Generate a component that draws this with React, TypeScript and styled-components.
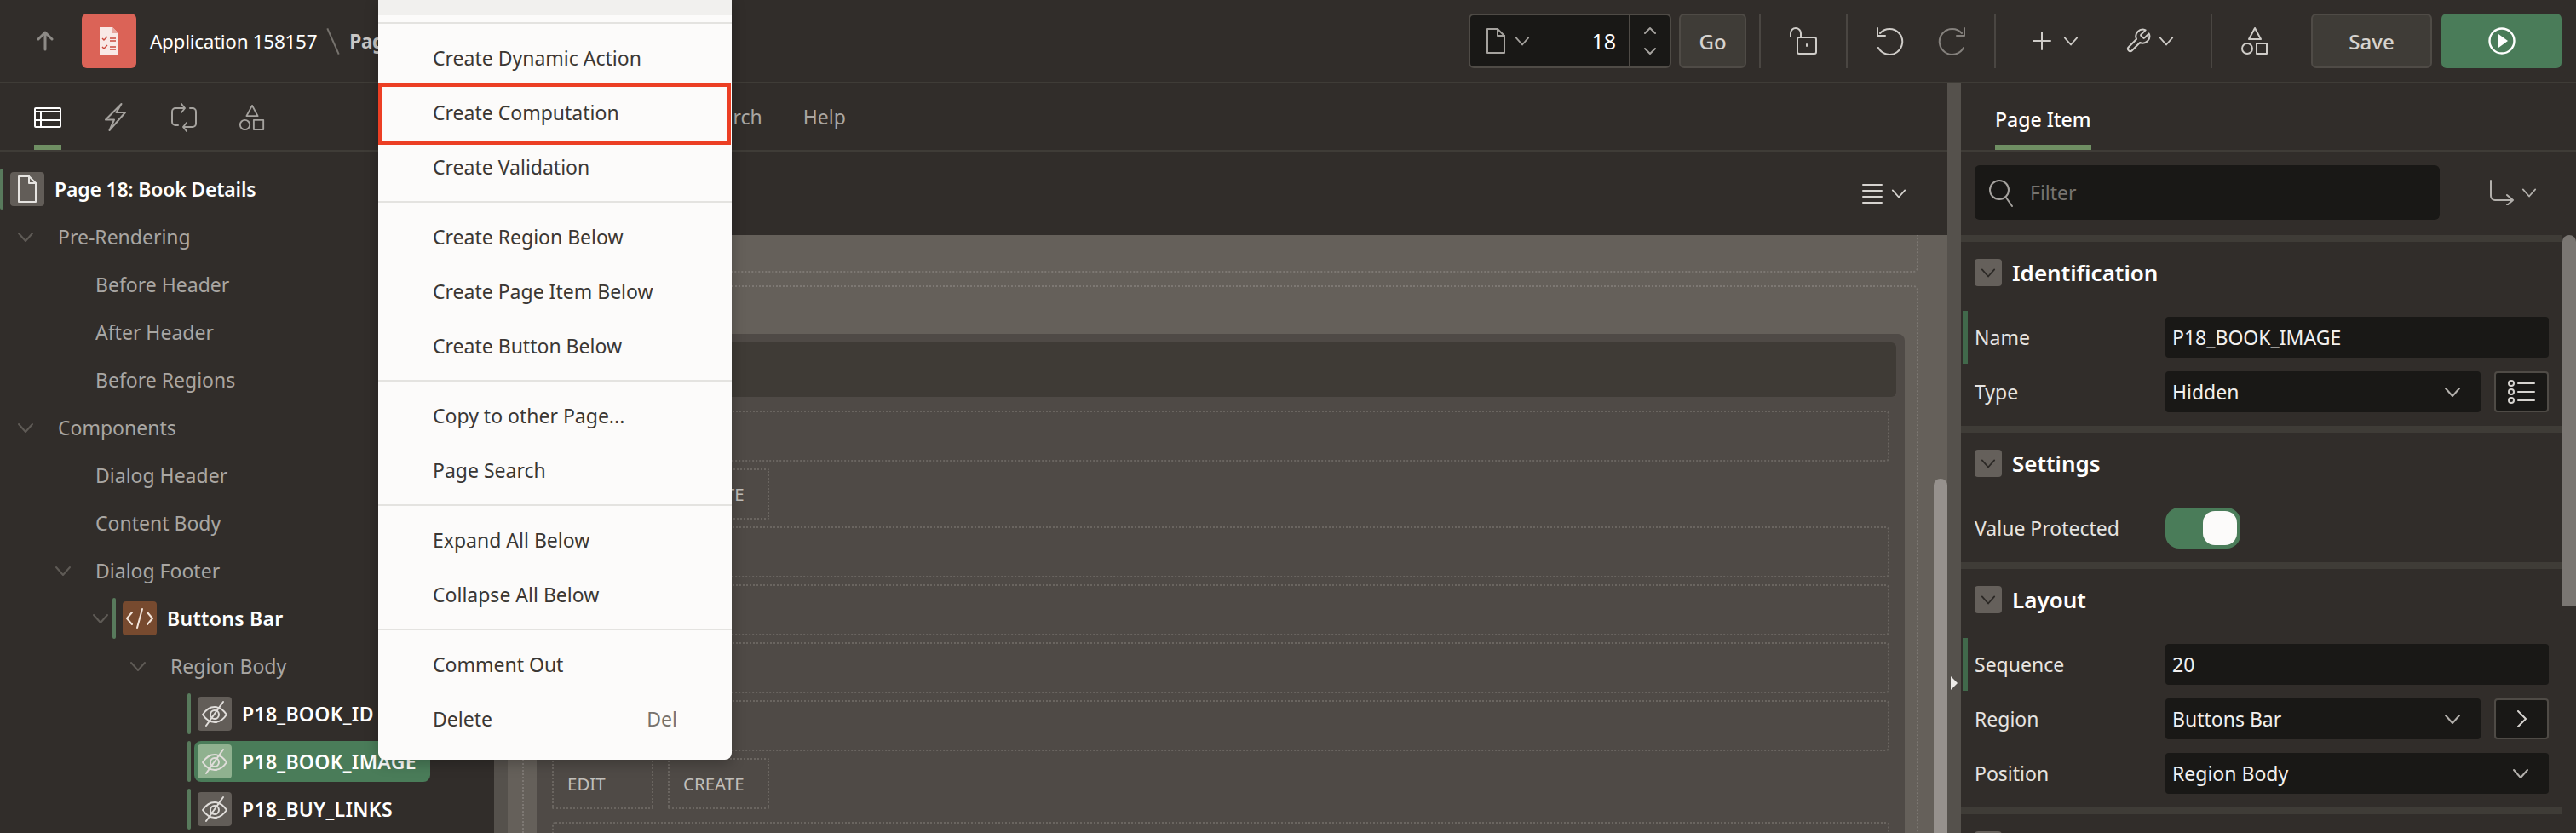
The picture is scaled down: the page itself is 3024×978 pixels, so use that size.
import React from "react";
import styled, { createGlobalStyle } from "styled-components";

const Global = createGlobalStyle`
  html, body { margin: 0; padding: 0; background: #312d2a; }
  * { box-sizing: border-box; }
  body { font-family: "Noto Sans", "Open Sans", sans-serif; }
`;

const C = {
  bg: "#312d2a",
  line: "#3f3c37",
  split: "#55514c",
  edge: "#4f4b46",
  field: "#191816",
  green: "#4a7c59",
  tab: "#6f8f63",
  bar: "#587a5c",
  mark: "#41694b",
  text: "#a9a6a2",
  icon: "#cfccc8",
};

const Page = styled.div`
  position: relative;
  width: 3024px;
  height: 978px;
  overflow: hidden;
  background: ${C.bg};
  display: flex;
  flex-direction: column;
  font-size: 23px;
  color: #fff;
`;

const Glyph = styled.svg<{ $c?: string; $sw?: number }>`
  display: block;
  flex: none;
  fill: none;
  stroke: ${(p) => p.$c || C.icon};
  stroke-width: ${(p) => p.$sw ?? 2};
  stroke-linecap: round;
  stroke-linejoin: round;
`;

const Header = styled.header`
  flex: none;
  height: 98px;
  padding: 16px 17px 16px 40px;
  border-bottom: 2px solid ${C.line};
  display: flex;
  align-items: stretch;
`;
const Back = styled.div`
  width: 56px;
  display: flex;
  align-items: center;
  padding-left: 3px;
`;
const Logo = styled.div`
  width: 64px;
  height: 64px;
  border-radius: 6px;
  background: #db6357;
  display: flex;
  align-items: center;
  justify-content: center;
`;
const Crumbs = styled.div`
  display: flex;
  align-items: center;
  margin-left: 16px;
  font-size: 22.5px;
  letter-spacing: -0.3px;
`;
const CrumbSlash = styled.span`
  display: block;
  width: 2px;
  height: 33px;
  margin: 0 18px;
  background: #77736e;
  transform: rotate(-24deg);
`;
const CrumbBold = styled.span`
  font-weight: 700;
  color: #c9c6c2;
`;
const Tools = styled.div`
  margin-left: auto;
  display: flex;
  align-items: stretch;
`;
const PageBox = styled.div`
  width: 238px;
  border: 2px solid ${C.edge};
  border-radius: 6px;
  background: ${C.field};
  display: flex;
  align-items: center;
  padding-left: 18px;
`;
const PageNo = styled.span`
  flex: 1;
  text-align: right;
  padding-right: 15px;
  font-size: 25px;
`;
const Stepper = styled.div`
  width: 48px;
  align-self: stretch;
  border-left: 2px solid ${C.edge};
  display: flex;
  flex-direction: column;
  align-items: center;
  justify-content: space-evenly;
`;
const GhostButton = styled.div<{ $w: number; $ml: number }>`
  width: ${(p) => p.$w}px;
  margin-left: ${(p) => p.$ml}px;
  background: ${C.line};
  border: 2px solid ${C.edge};
  border-radius: 6px;
  color: #d6d3cf;
  font-size: 24px;
  font-weight: 500;
  display: flex;
  align-items: center;
  justify-content: center;
`;
const RunButton = styled.div`
  width: 141px;
  margin-left: 11px;
  background: ${C.green};
  border-radius: 6px;
  display: flex;
  align-items: center;
  justify-content: center;
`;
const ToolGroup = styled.div<{ $w: number; $pl?: number; $center?: boolean }>`
  width: ${(p) => p.$w}px;
  padding-left: ${(p) => p.$pl ?? 0}px;
  border-left: 2px solid #4a4642;
  display: flex;
  align-items: center;
  justify-content: ${(p) => (p.$center ? "center" : "flex-start")};
`;
const Gap = styled.span<{ $w: number }>`
  flex: none;
  width: ${(p) => p.$w}px;
`;

const Main = styled.div`
  flex: 1;
  min-height: 0;
  display: flex;
`;
const TabStrip = styled.div`
  flex: none;
  height: 80px;
  border-bottom: 2px solid ${C.line};
  display: flex;
  align-items: flex-end;
`;
const LeftPanel = styled.aside`
  flex: none;
  width: 580px;
  display: flex;
  flex-direction: column;
`;
const IconTab = styled.div<{ $on?: boolean }>`
  width: 32px;
  height: 72px;
  margin-right: 48px;
  padding: 18px 0 16px;
  display: flex;
  justify-content: center;
  align-items: center;
  border-bottom: 6px solid ${(p) => (p.$on ? C.tab : "transparent")};
`;
const IconTabs = styled.div`
  display: flex;
  padding-left: 40px;
`;
const Tree = styled.div`
  padding-top: 16px;
  display: flex;
  flex-direction: column;
`;
const Row = styled.div<{ $pad: number }>`
  height: 56px;
  flex: none;
  padding-left: ${(p) => p.$pad}px;
  display: flex;
  align-items: center;
`;
const Twisty = styled.span<{ $w: number }>`
  flex: none;
  width: ${(p) => p.$w}px;
`;
const Marker = styled.span`
  flex: none;
  width: 4px;
  height: 48px;
  border-radius: 2px;
  background: ${C.bar};
  margin-right: 4px;
`;
const Pill = styled.div<{ $on?: boolean; $flush?: boolean }>`
  height: 48px;
  padding: ${(p) => (p.$flush ? "0" : "0 16px 0 4px")};
  display: flex;
  align-items: center;
  gap: 12px;
  border-radius: 8px;
  background: ${(p) => (p.$on ? C.green : "transparent")};
  font-weight: 600;
  letter-spacing: ${(p) => (p.$flush ? "-0.2px" : "0.3px")};
  color: #fff;
`;
const Badge = styled.span<{ $bg: string }>`
  width: 40px;
  height: 40px;
  flex: none;
  border-radius: 4px;
  background: ${(p) => p.$bg};
  display: flex;
  align-items: center;
  justify-content: center;
`;
const RowLabel = styled.span`
  color: ${C.text};
`;

const Splitter = styled.div`
  flex: none;
  width: 16px;
  background: ${C.split};
  display: flex;
  align-items: center;
  justify-content: center;
`;
const Triangle = styled.span`
  width: 0;
  height: 0;
  margin-top: 528px;
  border-left: 8px solid #eeece9;
  border-top: 8px solid transparent;
  border-bottom: 8px solid transparent;
`;

const Center = styled.main`
  flex: 1;
  min-width: 0;
  display: flex;
  flex-direction: column;
`;
const TextTabs = styled.div`
  display: flex;
  align-self: center;
  gap: 48px;
  padding-left: 166px;
  color: ${C.text};
`;
const CanvasBar = styled.div`
  flex: none;
  height: 98px;
  padding: 0 48px 0 0;
  display: flex;
  align-items: center;
  justify-content: flex-end;
  gap: 10px;
`;
const CanvasWrap = styled.div`
  flex: 1;
  min-height: 0;
  display: flex;
  overflow: hidden;
  background: #65605a;
`;
const Canvas = styled.div`
  flex: 1;
  min-width: 0;
  padding: 0 18px 0 17px;
  overflow: hidden;
`;
const Track = styled.div`
  flex: none;
  width: 16px;
  display: flex;
  flex-direction: column;
`;
const Thumb = styled.div<{ $top: number; $h: number; $bg: string }>`
  margin-top: ${(p) => p.$top}px;
  height: ${(p) => p.$h}px;
  background: ${(p) => p.$bg};
  border-radius: 8px 8px 0 0;
`;
const TopBox = styled.div`
  height: 64px;
  margin-top: -20px;
  border: 2px dotted #7d7873;
  border-radius: 6px;
`;
const BigBox = styled.div`
  margin-top: 15px;
  padding: 55px 14px 0 15px;
  height: 900px;
  border: 2px dotted #7d7873;
  border-radius: 6px;
`;
const RegionPanel = styled.section`
  background: #4f4a46;
  border-radius: 8px 8px 0 0;
  padding: 10px 10px 0 10px;
  height: 840px;
`;
const RegionHead = styled.div`
  height: 64px;
  border-radius: 6px;
  background: #3f3b36;
`;
const SlotList = styled.div`
  margin: 16px 8px 0 8px;
  display: flex;
  flex-direction: column;
  gap: 8px;
`;
const SlotRow = styled.div<{ $late?: boolean }>`
  height: 60px;
  margin-top: ${(p) => (p.$late ? 7 : 0)}px;
  border: 2px dotted #6a6560;
  border-radius: 4px;
`;
const SlotBtns = styled.div`
  display: flex;
  gap: 17px;
  height: 60px;
`;
const SlotBtn = styled.div<{ $w: number }>`
  width: ${(p) => p.$w}px;
  height: 60px;
  padding-left: 16px;
  border: 2px dotted #6a6560;
  border-radius: 2px;
  display: flex;
  align-items: center;
  color: #c2bfba;
  font-size: 20.5px;
`;

const RightPanel = styled.aside`
  flex: none;
  width: 722px;
  display: flex;
  flex-direction: column;
`;
const PanelTab = styled.div`
  margin-left: 40px;
  height: 72px;
  padding-top: 20px;
  border-bottom: 6px solid ${C.tab};
  font-weight: 500;
`;
const FilterRow = styled.div`
  flex: none;
  height: 98px;
  padding: 16px 0 18px 16px;
  display: flex;
  align-items: stretch;
`;
const FilterBox = styled.div`
  width: 546px;
  background: ${C.field};
  border-radius: 6px;
  padding-left: 16px;
  display: flex;
  align-items: center;
  gap: 19px;
  color: #77736e;
`;
const FilterAction = styled.div`
  margin-left: 58px;
  display: flex;
  align-items: center;
  gap: 8px;
`;
const PropsArea = styled.div`
  flex: 1;
  min-height: 0;
  display: flex;
  overflow: hidden;
`;
const Sections = styled.div`
  flex: 1;
  min-width: 0;
`;
const Section = styled.section`
  border-top: 8px solid ${C.line};
  padding-bottom: 8px;
`;
const SectionHead = styled.div`
  height: 80px;
  padding: 20px 16px 28px;
  display: flex;
  align-items: center;
  gap: 12px;
  font-size: 26px;
  font-weight: 600;
`;
const SectionToggle = styled.span`
  width: 32px;
  height: 32px;
  border-radius: 4px;
  background: #65605b;
  display: flex;
  align-items: center;
  justify-content: center;
`;
const PropRow = styled.div`
  height: 64px;
  padding: 0 16px 0 2px;
  display: flex;
  align-items: center;
`;
const PropMark = styled.span<{ $on?: boolean }>`
  flex: none;
  width: 6px;
  height: 62px;
  margin-right: 8px;
  background: ${(p) => (p.$on ? C.mark : "transparent")};
`;
const PropLabel = styled.label`
  flex: none;
  width: 224px;
  color: #e6e4e1;
`;
const Field = styled.div`
  flex: 1;
  height: 48px;
  background: ${C.field};
  border-radius: 4px;
  padding: 0 23px 0 8px;
  display: flex;
  align-items: center;
  justify-content: space-between;
  color: #f2f0ee;
`;
const SideButton = styled.div`
  flex: none;
  width: 64px;
  height: 48px;
  margin-left: 16px;
  border: 2px solid ${C.edge};
  border-radius: 4px;
  background: ${C.field};
  display: flex;
  align-items: center;
  justify-content: center;
`;
const Toggle = styled.div`
  width: 88px;
  height: 48px;
  padding: 4px;
  border-radius: 16px;
  background: ${C.green};
  display: flex;
  justify-content: flex-end;
`;
const Knob = styled.span`
  width: 40px;
  height: 40px;
  border-radius: 14px;
  background: #fcfbfa;
`;

const Menu = styled.div`
  position: absolute;
  left: 444px;
  top: 0;
  width: 415px;
  background: #fcfbfa;
  border-radius: 0 0 8px 8px;
  color: #3a3734;
  box-shadow: 0 4px 16px rgba(0, 0, 0, 0.25);
  padding-bottom: 8px;
`;
const MenuPeek = styled.div`
  height: 18px;
  margin-bottom: 8px;
  background: #f1f0ee;
`;
const MenuGroup = styled.div`
  border-top: 2px solid #e4e3e0;
  padding: 8px 0;
`;
const MenuItem = styled.div<{ $hi?: boolean }>`
  position: relative;
  height: 64px;
  padding: 0 64px;
  display: flex;
  align-items: center;
  justify-content: space-between;
  &::after {
    content: "";
    display: ${(p) => (p.$hi ? "block" : "none")};
    position: absolute;
    left: 0;
    right: 1px;
    top: -2px;
    bottom: -6px;
    border: 4px solid #ec3f24;
  }
`;
const Shortcut = styled.span`
  color: #77726d;
`;

const Chevron = ({ c = "#5f5b56", w = 20 }: { c?: string; w?: number }) => (
  <Glyph $c={c} width={w} height={w} viewBox="0 0 20 20">
    <path d="M2 6l8 9 8-9" />
  </Glyph>
);

const Shapes = ({ c = "#a5a29e", s = 32 }: { c?: string; s?: number }) => (
  <Glyph $c={c} width={s} height={s} viewBox="0 0 34 34">
    <path d="M17 2l7 13H10z" />
    <circle cx="8" cy="26" r="6" />
    <rect x="19" y="20" width="12" height="12" />
  </Glyph>
);

const EyeOff = () => (
  <Glyph $c="#e0ddda" width="32" height="32" viewBox="0 0 32 32">
    <path d="M2 17c4-6 9-9 14-9s10 3 14 9c-4 6-9 9-14 9s-10-3-14-9z" />
    <circle cx="16" cy="17" r="5" />
    <path d="M26 2L6 30" />
  </Glyph>
);

const PageGlyph = ({ w, h, c, sw }: { w: number; h: number; c: string; sw?: number }) => (
  <Glyph $c={c} $sw={sw} width={w} height={h} viewBox={`0 0 ${w} ${h}`}>
    <path d={`M2 2h${w - 12}l8 8v${h - 12}H2z`} />
    <path d={`M${w - 10} 2v8h8`} />
  </Glyph>
);

type TreeItem = {
  label: string;
  pad: number;
  tw?: number;
  chevron?: boolean;
  kind?: "plain" | "code" | "hidden";
  on?: boolean;
};

const tree: TreeItem[] = [
  { label: "Pre-Rendering", pad: 20, tw: 48, chevron: true },
  { label: "Before Header", pad: 112 },
  { label: "After Header", pad: 112 },
  { label: "Before Regions", pad: 112 },
  { label: "Components", pad: 20, tw: 48, chevron: true },
  { label: "Dialog Header", pad: 112 },
  { label: "Content Body", pad: 112 },
  { label: "Dialog Footer", pad: 64, tw: 48, chevron: true },
  { label: "Buttons Bar", pad: 108, tw: 24, chevron: true, kind: "code" },
  { label: "Region Body", pad: 152, tw: 48, chevron: true },
  { label: "P18_BOOK_ID", pad: 220, kind: "hidden" },
  { label: "P18_BOOK_IMAGE", pad: 220, kind: "hidden", on: true },
  { label: "P18_BUY_LINKS", pad: 220, kind: "hidden" },
];

const menuGroups: { label: string; hi?: boolean; key?: string }[][] = [
  [{ label: "Create Dynamic Action" }, { label: "Create Computation", hi: true }, { label: "Create Validation" }],
  [{ label: "Create Region Below" }, { label: "Create Page Item Below" }, { label: "Create Button Below" }],
  [{ label: "Copy to other Page..." }, { label: "Page Search" }],
  [{ label: "Expand All Below" }, { label: "Collapse All Below" }],
  [{ label: "Comment Out" }, { label: "Delete", key: "Del" }],
];

const Btns = () => (
  <SlotBtns>
    <SlotBtn $w={119}>EDIT</SlotBtn>
    <SlotBtn $w={119}>CREATE</SlotBtn>
  </SlotBtns>
);

export default function App() {
  return (
    <Page>
      <Global />
      <Header>
        <Back>
          <Glyph $c="#8d8a86" $sw={3} width="20" height="24" viewBox="0 0 20 24">
            <path d="M10 22V2M2 10l8-8 8 8" />
          </Glyph>
        </Back>
        <Logo>
          <svg width="24" height="32" viewBox="0 0 24 32">
            <path d="M1 0h15l7 7v25H1z" fill="#f9e9e6" />
            <path d="M16 0l7 7h-7z" fill="#e7a79f" />
            <path d="M4 13l2 2 4-4M4 23l2 2 4-4" fill="none" stroke="#c9483c" strokeWidth="1.4" />
            <path d="M13 13h7M13 16h7M13 23h7M13 26h7" fill="none" stroke="#c9483c" strokeWidth="1.4" />
          </svg>
        </Logo>
        <Crumbs>
          <span>Application 158157</span>
          <CrumbSlash />
          <CrumbBold>Page 18</CrumbBold>
        </Crumbs>
        <Tools>
          <PageBox>
            <PageGlyph w={24} h={32} c="#a5a29e" />
            <Gap $w={10} />
            <Chevron c="#a5a29e" w={18} />
            <PageNo>18</PageNo>
            <Stepper>
              <Glyph $c="#a5a29e" width="14" height="10" viewBox="0 0 14 10">
                <path d="M1 8l6-6 6 6" />
              </Glyph>
              <Glyph $c="#a5a29e" width="14" height="10" viewBox="0 0 14 10">
                <path d="M1 2l6 6 6-6" />
              </Glyph>
            </Stepper>
          </PageBox>
          <GhostButton $w={79} $ml={9}>Go</GhostButton>
          <Gap $w={15} />
          <ToolGroup $w={102} $center>
            <Glyph width="32" height="32" viewBox="0 0 32 32">
              <path d="M1 11V7a6 6 0 0 1 12 0v4" />
              <rect x="9" y="12" width="22" height="19" rx="2" />
              <path d="M20 20v2" />
            </Glyph>
          </ToolGroup>
          <ToolGroup $w={174} $pl={34}>
            <Glyph width="32" height="32" viewBox="0 0 32 32">
              <path d="M4 7A15 15 0 1 1 2 24" />
              <path d="M1 1v9h9" />
            </Glyph>
            <Gap $w={40} />
            <Glyph $c="#85817d" width="32" height="32" viewBox="0 0 32 32">
              <path d="M28 7A15 15 0 1 0 30 24" />
              <path d="M31 1v9h-9" />
            </Glyph>
          </ToolGroup>
          <ToolGroup $w={254} $pl={43}>
            <Glyph width="22" height="22" viewBox="0 0 22 22">
              <path d="M11 1v20M1 11h20" />
            </Glyph>
            <Gap $w={14} />
            <Chevron c={C.icon} w={18} />
            <Gap $w={54} />
            <Glyph $sw={1.5} width="32" height="32" viewBox="0 0 24 24">
              <path d="M14.7 6.3a1 1 0 0 0 0 1.4l1.6 1.6a1 1 0 0 0 1.4 0l3.77-3.77a6 6 0 0 1-7.94 7.94l-6.91 6.91a2.12 2.12 0 0 1-3-3l6.91-6.91a6 6 0 0 1 7.94-7.94l-3.76 3.76z" />
            </Glyph>
            <Gap $w={8} />
            <Chevron c={C.icon} w={18} />
          </ToolGroup>
          <ToolGroup $w={102} $center>
            <Shapes c={C.icon} s={34} />
          </ToolGroup>
          <GhostButton $w={142} $ml={16}>Save</GhostButton>
          <RunButton>
            <svg width="32" height="32" viewBox="0 0 32 32">
              <circle cx="16" cy="16" r="14.5" fill="none" stroke="#fff" strokeWidth="2.4" />
              <path d="M12 8l11 8-11 8z" fill="#fff" />
            </svg>
          </RunButton>
        </Tools>
      </Header>

      <Main>
        <LeftPanel>
          <TabStrip>
            <IconTabs>
              <IconTab $on>
                <Glyph $c="#fff" width="32" height="24" viewBox="0 0 32 24">
                  <rect x="1" y="1" width="30" height="22" rx="1" />
                  <path d="M1 5h30M1 15h30M8 5v18" />
                </Glyph>
              </IconTab>
              <IconTab>
                <Glyph $c="#a5a29e" width="26" height="34" viewBox="0 0 26 34">
                  <path d="M19.5 1L1 19.5h10L5.5 32 24 11H13.5z" />
                </Glyph>
              </IconTab>
              <IconTab>
                <Glyph $c="#a5a29e" width="32" height="34" viewBox="0 0 32 34">
                  <path d="M16 6H6a4 4 0 0 0-4 4v12a4 4 0 0 0 4 4h3M16 28h10a4 4 0 0 0 4-4V10a4 4 0 0 0-4-4h-3" />
                  <path d="M13 1l4 5-4 5M19 23l-4 5 4 5" />
                </Glyph>
              </IconTab>
              <IconTab>
                <Shapes />
              </IconTab>
            </IconTabs>
          </TabStrip>
          <Tree>
            <Row $pad={0}>
              <Marker />
              <Gap $w={4} />
              <Badge $bg="#625d58">
                <PageGlyph w={24} h={34} c="#e6e4e1" />
              </Badge>
              <Gap $w={12} />
              <Pill $flush>Page 18: Book Details</Pill>
            </Row>
            {tree.map((t) =>
              t.kind ? (
                <Row key={t.label} $pad={t.pad}>
                  {t.tw && (
                    <Twisty $w={t.tw}>
                      <Chevron />
                    </Twisty>
                  )}
                  <Marker />
                  <Pill $on={t.on}>
                    <Badge $bg={t.kind === "code" ? "#774a2f" : t.on ? "#8fb18f" : "#625d58"}>
                      {t.kind === "code" ? (
                        <Glyph $c="#f3e6dc" width="34" height="26" viewBox="0 0 34 26">
                          <path d="M8 6l-6 7 6 7M26 6l6 7-6 7M20 2l-6 22" />
                        </Glyph>
                      ) : (
                        <EyeOff />
                      )}
                    </Badge>
                    {t.label}
                  </Pill>
                </Row>
              ) : (
                <Row key={t.label} $pad={t.pad}>
                  {t.tw && (
                    <Twisty $w={t.tw}>
                      <Chevron />
                    </Twisty>
                  )}
                  <RowLabel>{t.label}</RowLabel>
                </Row>
              )
            )}
          </Tree>
        </LeftPanel>
        <Splitter />
        <Center>
          <TabStrip>
            <TextTabs>
              <span>Page Search</span>
              <span>Help</span>
            </TextTabs>
          </TabStrip>
          <CanvasBar>
            <Glyph $c="#d6d3cf" width="24" height="24" viewBox="0 0 24 24">
              <path d="M1 2h22M1 9h22M1 16h22M1 23h22" />
            </Glyph>
            <Chevron c="#d6d3cf" w={18} />
          </CanvasBar>
          <CanvasWrap>
            <Canvas>
              <TopBox />
              <BigBox>
                <RegionPanel>
                  <RegionHead />
                  <SlotList>
                    <SlotRow />
                    <Btns />
                    <SlotRow />
                    <SlotRow />
                    <SlotRow />
                    <SlotRow />
                    <Btns />
                    <SlotRow $late />
                  </SlotList>
                </RegionPanel>
              </BigBox>
            </Canvas>
            <Track>
              <Thumb $top={286} $h={500} $bg="#96918d" />
            </Track>
          </CanvasWrap>
        </Center>
        <Splitter>
          <Triangle />
        </Splitter>
        <RightPanel>
          <TabStrip>
            <PanelTab>Page Item</PanelTab>
          </TabStrip>
          <FilterRow>
            <FilterBox>
              <Glyph $c="#a5a29e" width="30" height="34" viewBox="0 0 30 34">
                <circle cx="13" cy="14" r="11" />
                <path d="M21 23l7 10" />
              </Glyph>
              Filter
            </FilterBox>
            <FilterAction>
              <Glyph $c="#b3b0ac" width="30" height="30" viewBox="0 0 30 30">
                <path d="M2 1v18a5 5 0 0 0 5 5h21M21 18l7 6-7 6" />
              </Glyph>
              <Chevron c="#b3b0ac" w={18} />
            </FilterAction>
          </FilterRow>
          <PropsArea>
            <Sections>
              <Section>
                <SectionHead>
                  <SectionToggle><Chevron c="#2b2825" w={18} /></SectionToggle>
                  Identification
                </SectionHead>
                <PropRow>
                  <PropMark $on />
                  <PropLabel>Name</PropLabel>
                  <Field>P18_BOOK_IMAGE</Field>
                </PropRow>
                <PropRow>
                  <PropMark />
                  <PropLabel>Type</PropLabel>
                  <Field>
                    Hidden
                    <Chevron c="#b3b0ac" />
                  </Field>
                  <SideButton>
                    <Glyph $c="#d6d3cf" width="32" height="28" viewBox="0 0 32 28">
                      <circle cx="4" cy="4" r="3" />
                      <circle cx="4" cy="14" r="3" />
                      <circle cx="4" cy="24" r="3" />
                      <path d="M12 4h19M12 14h19M12 24h19" />
                    </Glyph>
                  </SideButton>
                </PropRow>
              </Section>
              <Section>
                <SectionHead>
                  <SectionToggle><Chevron c="#2b2825" w={18} /></SectionToggle>
                  Settings
                </SectionHead>
                <PropRow>
                  <PropMark />
                  <PropLabel>Value Protected</PropLabel>
                  <Toggle><Knob /></Toggle>
                </PropRow>
              </Section>
              <Section>
                <SectionHead>
                  <SectionToggle><Chevron c="#2b2825" w={18} /></SectionToggle>
                  Layout
                </SectionHead>
                <PropRow>
                  <PropMark $on />
                  <PropLabel>Sequence</PropLabel>
                  <Field>20</Field>
                </PropRow>
                <PropRow>
                  <PropMark />
                  <PropLabel>Region</PropLabel>
                  <Field>
                    Buttons Bar
                    <Chevron c="#b3b0ac" />
                  </Field>
                  <SideButton>
                    <Glyph $c="#d6d3cf" width="12" height="20" viewBox="0 0 12 20">
                      <path d="M2 1l9 9-9 9" />
                    </Glyph>
                  </SideButton>
                </PropRow>
                <PropRow>
                  <PropMark />
                  <PropLabel>Position</PropLabel>
                  <Field>
                    Region Body
                    <Chevron c="#b3b0ac" />
                  </Field>
                </PropRow>
              </Section>
              <Section>
                <SectionHead>
                  <SectionToggle />
                </SectionHead>
              </Section>
            </Sections>
            <Track>
              <Thumb $top={0} $h={436} $bg="#7a7672" />
            </Track>
          </PropsArea>
        </RightPanel>
      </Main>

      <Menu>
        <MenuPeek />
        {menuGroups.map((g, i) => (
          <MenuGroup key={i}>
            {g.map((m) => (
              <MenuItem key={m.label} $hi={m.hi}>
                <span>{m.label}</span>
                {m.key && <Shortcut>{m.key}</Shortcut>}
              </MenuItem>
            ))}
          </MenuGroup>
        ))}
      </Menu>
    </Page>
  );
}
